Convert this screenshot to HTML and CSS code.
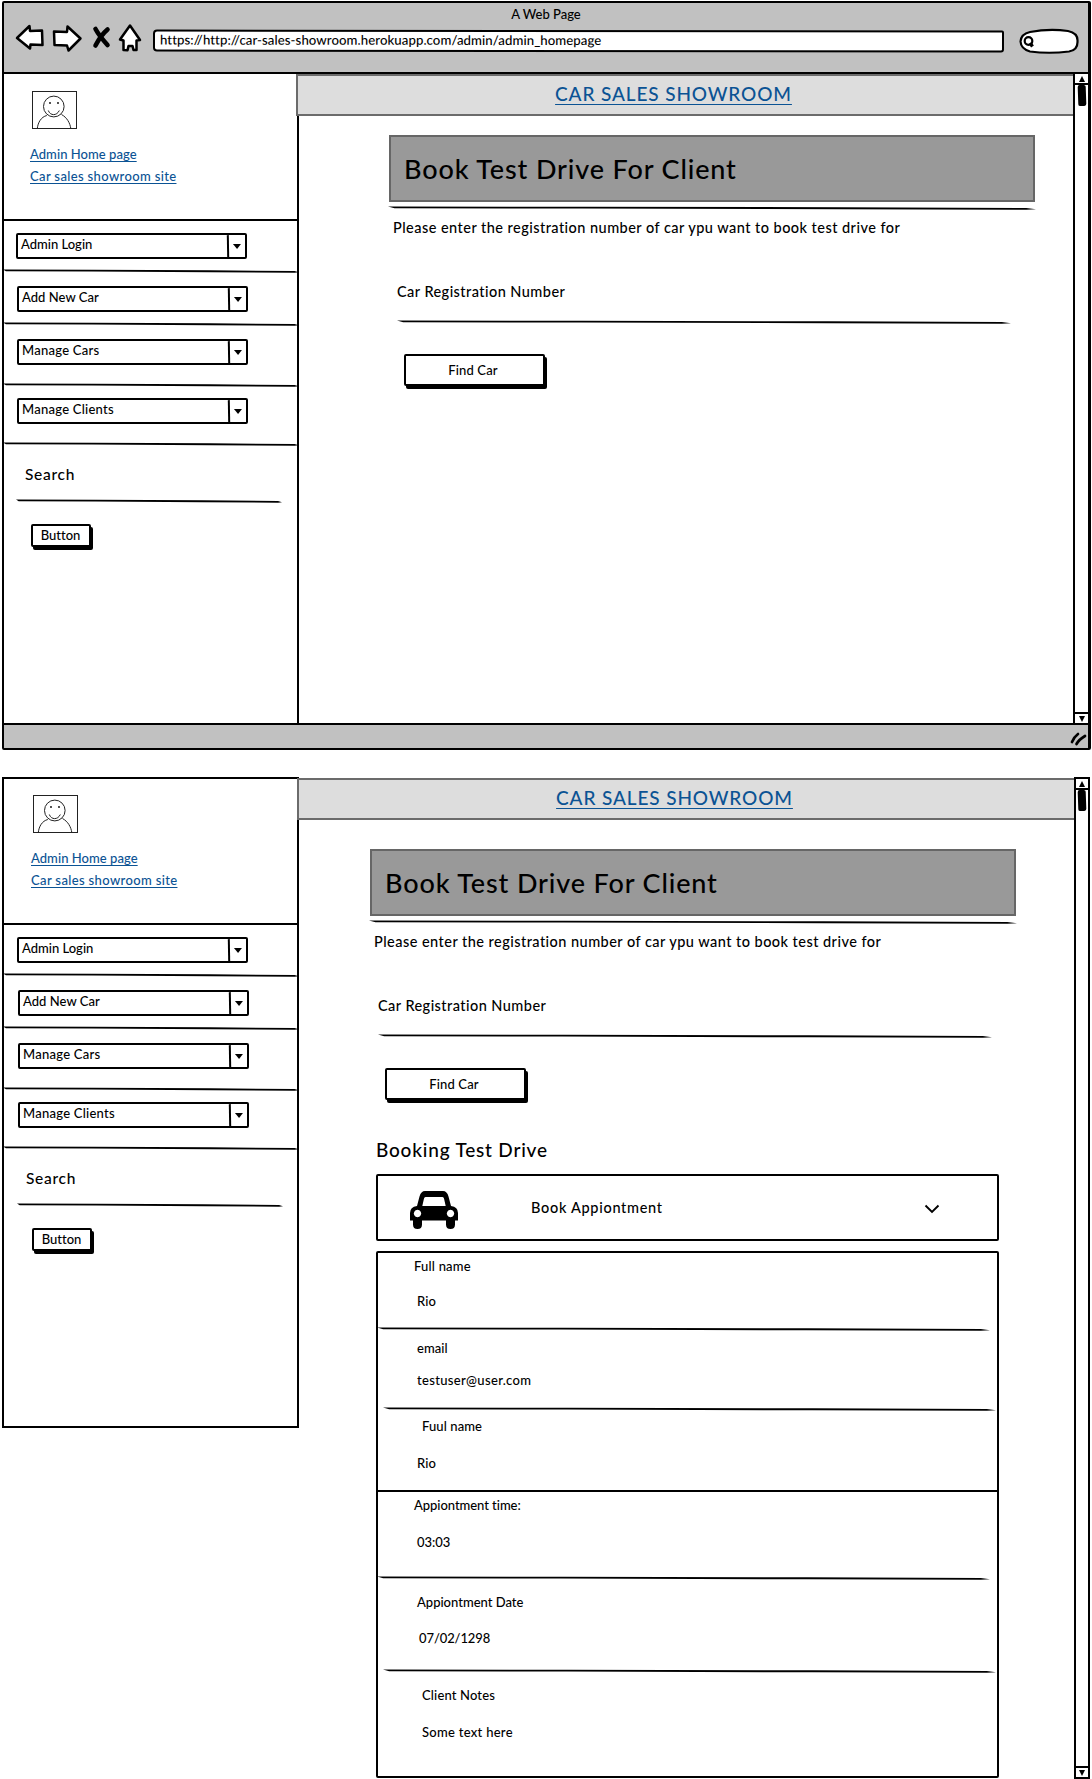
FILE: index.html
```
<!DOCTYPE html>
<html lang="en">
<head>
<meta charset="utf-8">
<title>Car Sales Showroom</title>
<link rel="stylesheet" href="styles.css">
</head>
<body>
<svg width="0" height="0" class="defs">
  <symbol id="rule" viewBox="0 0 100 5" preserveAspectRatio="none">
    <path d="M0 .6 L30 .7 L70 1.300 L98.500 2 L100 3.200 L98.500 3.700 L70 3.300 L30 2.500 L1 2.200Z"/>
  </symbol>
  <symbol id="avatar" viewBox="0 0 45 38">
    <g fill="none" stroke="#222" stroke-width="1">
      <rect x=".5" y=".5" width="44" height="37"/>
      <ellipse cx="21.8" cy="15.5" rx="10.3" ry="10.4"/>
      <path d="M16.3 19.5c2 5.5 8.500 5.500 11 0M14.800 24.500C9 26 6 31.500 5.300 37.500M29.500 23.500c5.500 3 8.500 8.500 9.300 14"/>
    </g>
    <circle cx="18" cy="12" r=".9"/><circle cx="26" cy="12" r=".9"/>
  </symbol>
  <symbol id="car" viewBox="0 0 48 38">
    <path fill-rule="evenodd" d="M7 15 L9.500 5.500 Q11 0 15 0 H33 Q37 0 38.500 5.500 L41 15 Q48 16 48 22 V29.500 H45 V33.500 Q45 38 40.500 38 T36 33.500 V29.500 H12 V33.500 Q12 38 7.500 38 T3 33.500 V29.500 H0 V22 Q0 16 7 15Z M15.500 6 Q14.300 6 14 7.500 L12.300 15 H35.700 L34 7.500 Q33.700 6 32.500 6Z M7.500 18.800 A3.700 3.700 0 1 0 7.510 18.800Z M40.500 18.800 A3.700 3.700 0 1 0 40.510 18.800Z"/>
  </symbol>
</svg>

<section class="window">
  <header class="toolbar">
    <div class="window-title">A Web Page</div>
    <div class="controls">
      <svg class="nav" width="128" height="30" viewBox="0 0 128 30">
        <g fill="#fff" stroke="#000" stroke-width="2.500" stroke-linejoin="round">
          <path d="M2 15 L14.500 3 L15 8 L27 7.500 L27.500 22 L15.500 21.500 L15 25.500Z"/>
          <path d="M39 8.500 L52 9 L52.500 3.500 L65.500 15.500 L53.500 27.500 L52 22.500 L39.500 22Z"/>
          <path d="M105 16.500 L115 2.500 L125 17 L121.500 17.500 L121.500 27 L118.500 27 L117.500 23 L113.500 23 L112.500 27.300 L108.500 27 L108.500 17.500Z"/>
        </g>
        <path d="M80.500 6 Q84 12.500 92.500 22 M92.500 6.500 Q86 12 80.500 22.500" fill="none" stroke="#000" stroke-width="4.600" stroke-linecap="round"/>
      </svg>
      <div class="url">https://http://car-sales-showroom.herokuapp.com/admin/admin_homepage</div>
      <svg class="search-pill" width="61" height="26" viewBox="0 0 61 26">
        <path d="M11 4 Q30 .5 49 3 Q59 5 58.500 13 Q59 22 50 23.500 Q30 26 11 23.500 Q2 21 1.500 13.500 Q2 6 11 4Z" fill="#fff" stroke="#000" stroke-width="2.200"/>
        <circle cx="9.500" cy="13" r="3.800" fill="none" stroke="#000" stroke-width="2.200"/>
        <path d="M11 15 L13.500 18.500" stroke="#000" stroke-width="3.400"/>
      </svg>
    </div>
  </header>
  <div class="window-body">
    <aside class="sidebar">
      <div class="profile">
        <svg class="avatar"><use href="#avatar"/></svg>
        <a>Admin Home page</a>
        <a class="wide">Car sales showroom site</a>
      </div>
      <div class="item"><div class="select"><span>Admin Login</span><i></i></div><svg class="rule"><use href="#rule"/></svg></div>
      <div class="item"><div class="select"><span>Add New Car</span><i></i></div><svg class="rule"><use href="#rule"/></svg></div>
      <div class="item"><div class="select"><span>Manage Cars</span><i></i></div><svg class="rule"><use href="#rule"/></svg></div>
      <div class="item"><div class="select"><span>Manage Clients</span><i></i></div><svg class="rule"><use href="#rule"/></svg></div>
      <div class="search">
        <label>Search</label>
        <svg class="rule"><use href="#rule"/></svg>
        <button class="btn">Button</button>
      </div>
    </aside>
    <main>
      <div class="banner"><a>CAR SALES SHOWROOM</a></div>
      <div class="panel">
        <h1>Book Test Drive For Client</h1>
        <svg class="rule under"><use href="#rule"/></svg>
        <p class="intro">Please enter the registration number of car ypu want to book test drive for</p>
        <p class="label">Car Registration Number</p>
        <svg class="rule input"><use href="#rule"/></svg>
        <button class="btn find">Find Car</button>
      </div>
    </main>
    <div class="scroll"><b class="up"></b><b class="thumb"></b><b class="down"></b></div>
  </div>
  <footer class="status">
    <svg width="17" height="14" viewBox="0 0 17 14"><path d="M2 10 Q4 5 8 2 M6.500 12 Q9 7.500 15 4" fill="none" stroke="#000" stroke-width="2.700" stroke-linecap="round"/></svg>
  </footer>
</section>

<section class="page">
  <aside class="sidebar">
    <div class="profile">
      <svg class="avatar"><use href="#avatar"/></svg>
      <a>Admin Home page</a>
      <a class="wide">Car sales showroom site</a>
    </div>
    <div class="item"><div class="select"><span>Admin Login</span><i></i></div><svg class="rule"><use href="#rule"/></svg></div>
    <div class="item"><div class="select"><span>Add New Car</span><i></i></div><svg class="rule"><use href="#rule"/></svg></div>
    <div class="item"><div class="select"><span>Manage Cars</span><i></i></div><svg class="rule"><use href="#rule"/></svg></div>
    <div class="item"><div class="select"><span>Manage Clients</span><i></i></div><svg class="rule"><use href="#rule"/></svg></div>
    <div class="search">
      <label>Search</label>
      <svg class="rule"><use href="#rule"/></svg>
      <button class="btn">Button</button>
    </div>
  </aside>
  <main>
    <div class="banner"><a>CAR SALES SHOWROOM</a></div>
    <div class="panel">
      <h1>Book Test Drive For Client</h1>
      <svg class="rule under"><use href="#rule"/></svg>
      <p class="intro">Please enter the registration number of car ypu want to book test drive for</p>
      <p class="label">Car Registration Number</p>
      <svg class="rule input"><use href="#rule"/></svg>
      <button class="btn find">Find Car</button>
      <h2>Booking Test Drive</h2>
      <div class="accordion">
        <svg class="car"><use href="#car"/></svg>
        <span>Book Appiontment</span>
        <svg class="chevron" width="16" height="10" viewBox="0 0 16 10"><path d="M1.500 1.500 L8 8 L14.500 1.500" fill="none" stroke="#000" stroke-width="1.900"/></svg>
      </div>
      <div class="details">
        <div class="field f1"><p>Full name</p><p class="value">Rio</p><svg class="rule"><use href="#rule"/></svg></div>
        <div class="field f2"><p>email</p><p class="value mail">testuser@user.com</p><svg class="rule"><use href="#rule"/></svg></div>
        <div class="field f3"><p>Fuul name</p><p class="value">Rio</p></div>
        <div class="field f4"><p>Appiontment time:</p><p class="value">03:03</p><svg class="rule"><use href="#rule"/></svg></div>
        <div class="field f5"><p>Appiontment Date</p><p class="value">07/02/1298</p><svg class="rule"><use href="#rule"/></svg></div>
        <div class="field f6"><p>Client Notes</p><p class="value">Some text here</p></div>
      </div>
    </div>
  </main>
  <div class="scroll"><b class="up"></b><b class="thumb"></b><b class="down"></b></div>
</section>
</body>
</html>
```
FILE: styles.css
```
* { box-sizing: border-box; }
body {
  margin: 0; width: 1092px; height: 1779px; overflow: hidden;
  background: #fff; color: #000;
  font: 500 13px/20px Lato, "Liberation Sans", sans-serif;
  font-variant-ligatures: none;
  display: flex; flex-direction: column; align-items: flex-start;
}
p, h1, h2 { margin: 0; font-weight: 500; }
svg { display: block; flex: none; }
.defs { position: absolute; }
a { color: #0b5394; text-decoration: underline; text-decoration-thickness: 1px; text-underline-offset: 2px; }
.rule { height: 5px; width: 100%; }

/* browser window */
.window { margin: 1px 0 0 2px; width: 1089px; height: 749px; border: 2px solid #000; border-right-width: 3px; border-radius: 2px; }
.toolbar { height: 71px; background: #c1c1c1; border-bottom: 2px solid #000; }
.window-title { padding-top: 1px; text-align: center; }
.controls { display: flex; align-items: flex-start; padding: 0 8px 0 11px; }
.nav { margin-top: -1px; }
.url {
  margin: 6px 0 0 10px; width: 851px; height: 22px; padding-left: 5px;
  background: #fff; border: 2px solid #000; border-radius: 4px 2px 3px 4px;
  font-size: 13.200px; line-height: 17px; letter-spacing: .07px; transform: rotate(.06deg);
}
.search-pill { margin: 4px 0 0 15px; }
.window-body { display: flex; height: 649px; }
.status { height: 25px; background: #c1c1c1; border-top: 2px solid #000; display: flex; justify-content: flex-end; padding: 7px 1px 0; }

/* sidebar */
.sidebar { width: 295px; flex: none; border-right: 2px solid #000; }
.profile { height: 147px; padding: 17px 0 0 26px; border-bottom: 2px solid #000; display: flex; flex-direction: column; align-items: flex-start; }
.avatar { width: 45px; height: 38px; margin-left: 2px; }
.profile a { margin-top: 15px; letter-spacing: .05px; }
.profile a.wide { margin-top: 2px; letter-spacing: .36px; }
.item { height: 52px; padding: 12px 0 0 12px; display: flex; flex-direction: column; }
.item:nth-child(3) { height: 53px; padding-top: 13px; }
.item:nth-child(4) { height: 61px; padding-top: 13px; }
.item:nth-child(5) { height: 59px; padding-top: 11px; }
.item .rule { margin: auto 0 -1px -13px; width: 296px; }
.select { width: 231px; height: 26px; margin-left: 1px; border: 2px solid #000; border-radius: 2px; display: flex; line-height: 19px; letter-spacing: .25px; }
.item:nth-child(2) .select { margin-left: 0; letter-spacing: 0; }
.item:nth-child(3) .select { letter-spacing: .05px; }
.select span { flex: 1; padding-left: 3px; }
.select i { width: 18px; border-left: 2px solid #000; transform: rotate(-1deg); display: flex; justify-content: center; align-items: center; }
.select i::after { content: ""; border: 4.500px solid transparent; border-top: 5px solid #000; border-bottom: 0; }
.search { padding: 18px 0 0 13px; }
.search label { display: block; margin-left: 8px; font-size: 15.500px; letter-spacing: .7px; }
.search .rule { width: 266px; margin: 15px 0 0 -1px; }
.btn {
  display: block; padding: 0; font: inherit; color: #000; background: #fff; text-align: center;
  border: 2px solid #000; border-radius: 2px; box-shadow: 2px 3px 0 #000;
}
.search .btn { width: 60px; height: 23px; margin: 20px 0 0 14px; padding-right: 1px; line-height: 19px; }

/* main column */
main { flex: 1; min-width: 0; }
.banner { height: 42px; margin-left: -3px; position: relative; background: #ddd; border: 2px solid #6b6b6b; border-right: 0; text-align: center; }
.banner a { font-size: 19px; line-height: 36px; letter-spacing: .88px; text-underline-offset: 3px; margin-right: 24px; }
.panel { margin: 19px 0 0 90px; width: 646px; display: flex; flex-direction: column; align-items: flex-start; }
h1 { width: 646px; height: 67px; padding: 16px 13px 0; background: #999; border: 2px solid #666; font-size: 27px; line-height: 32px; letter-spacing: .86px; }
.under { width: 648px; margin: 4px 0 0 -1px; }
.intro { margin: 7px 0 0 4px; font-size: 14.500px; letter-spacing: .46px; white-space: nowrap; }
.label { margin: 44px 0 0 8px; font-size: 14.500px; letter-spacing: .45px; }
.input { width: 614px; margin: 18px 0 0 8px; }
.find { width: 141px; height: 32px; margin: 29px 0 0 15px; letter-spacing: .15px; line-height: 28px; padding-right: 3px; }

/* scrollbar */
.scroll { width: 15px; flex: none; border-left: 2px solid #000; display: flex; flex-direction: column; align-items: center; background: #fff; }
.scroll b { display: flex; justify-content: center; align-items: center; width: 100%; height: 11px; }
.scroll .up { border-bottom: 2px solid #000; }
.scroll .up::after, .scroll .down::after { content: ""; border: 3.500px solid transparent; border-bottom: 6px solid #000; border-top: 0; }
.scroll .thumb { width: 8px; height: 21px; background: #000; border-radius: 2px; transform: rotate(-2deg); }
.scroll .down { margin-top: auto; border-top: 2px solid #000; }
.scroll .down::after { transform: rotate(180deg); }

/* second page */
.page { margin: 27px 0 0 2px; width: 1088px; height: 1002px; display: flex; align-items: flex-start; }
.page .sidebar { width: 297px; height: 651px; border: 2px solid #000; }
.page .profile { height: 146px; padding: 16px 0 0 27px; }
.page .select { position: relative; left: 1px; }
.page .search { padding-left: 14px; }
.page main { padding-top: 1px; }
.page .banner { margin-left: -2px; }
.page .panel { margin: 29px 0 0 71px; }
.page .scroll { width: 16px; height: 1002px; border: 2px solid #000; }
h2 { margin: 38px 0 0 6px; font-size: 19px; line-height: 24px; letter-spacing: .8px; }
.accordion { width: 623px; height: 67px; margin: 12px 0 0 6px; border: 2px solid #000; border-radius: 2px; display: flex; align-items: center; padding: 0 57px 0 32px; font-size: 14.500px; letter-spacing: .7px; }
.car { width: 48px; height: 38px; margin-top: 4px; }
.accordion span { flex: 1; margin-left: 73px; }
.chevron { margin-top: 3px; }
.details { width: 623px; height: 527px; margin: 10px 0 0 6px; border: 2px solid #000; border-radius: 2px; }
.field { display: flex; flex-direction: column; align-items: flex-start; padding-left: 39px; height: 79px; padding-top: 3px; letter-spacing: .08px; }
.field .value { margin-top: 15px; }
.field .mail { letter-spacing: .33px; }
.field .rule { width: 613px; margin: auto 0 0 -40px; }
.f1 p:first-child { margin-left: -3px; letter-spacing: .2px; }
.f2 { height: 80px; padding-top: 6px; }
.f2 .value { margin-top: 12px; }
.f2 .rule, .f5 .rule { margin-left: -34px; }
.f3 { height: 80px; padding-top: 4px; border-bottom: 2px solid #000; }
.f3 p:first-child { margin-left: 5px; letter-spacing: .1px; }
.f3 .value, .f4 .value { margin-top: 17px; }
.f4 { height: 89px; letter-spacing: -.05px; }
.f4 p:first-child { margin-left: -3px; }
.f5 { height: 93px; padding-top: 11px; letter-spacing: 0; }
.f5 .value { margin: 16px 0 0 2px; letter-spacing: -.1px; }
.f6 { height: 102px; padding: 11px 0 0 44px; letter-spacing: .15px; }
.f6 .value { margin-top: 17px; letter-spacing: .28px; }
```
